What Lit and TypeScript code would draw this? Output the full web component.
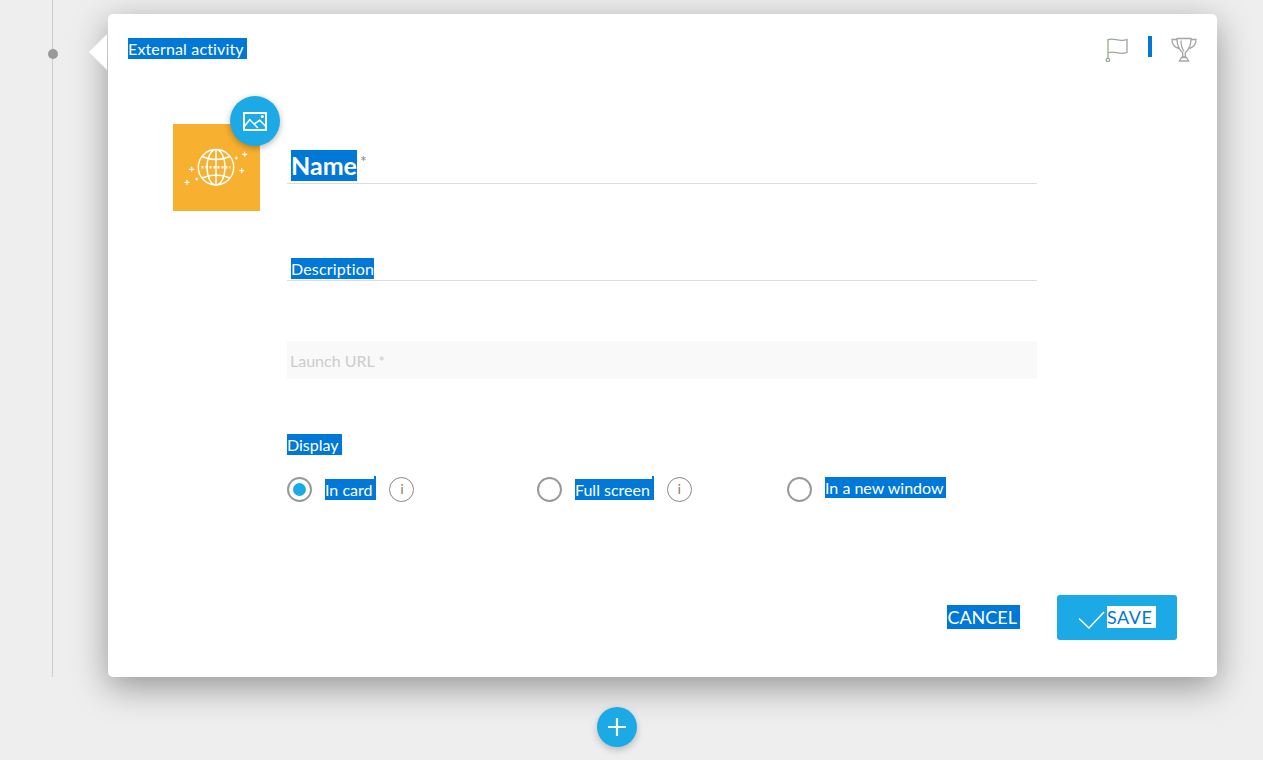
import { LitElement, html, css, svg } from "lit";
import { customElement } from "lit/decorators.js";

const sparkles: [number, number, number][] = [
  [71.7, 30.3, 2.5], [63.3, 34, 1.6], [68.7, 46.7, 2.5],
  [18.7, 45.3, 2.5], [23.7, 55, 1.6], [14, 58.3, 2.5],
];
const globe = svg`<g fill="none" stroke="#fff" stroke-width="1.500">
<circle cx="43" cy="43.300" r="17.700"/>
<ellipse cx="43" cy="43.300" rx="9" ry="17.700"/>
<path d="M43 25.600v35.400M29 32.500q14 6 28 0M29 54q14-6 28 0"/>
<path d="M28.500 43.300h29" stroke-dasharray="2 2" stroke-width="2.600"/>
${sparkles.map(([x, y, r]) => svg`<path d="M${x - r} ${y}h${2 * r}M${x} ${y - r}v${2 * r}" stroke-width="1.200"/>`)}
</g>`;

@customElement("app-root")
export class AppRoot extends LitElement {
  static styles = css`
    :host { display: block; font-family: Lato, "Open Sans", sans-serif; color: #555; }
    .page { position: relative; height: 760px; box-sizing: border-box; padding: 14px 46px 0 108px; background: #eee; overflow: hidden; }
    .line { position: absolute; left: 52px; top: 0; width: 1px; height: 677px; background: #ccc; }
    .dot { position: absolute; left: 48px; top: 49px; width: 10px; height: 10px; border-radius: 50%; background: #999; }
    .hl { background: #0078d7; color: #fff; padding-block: 1px; }
    .card { position: relative; box-sizing: border-box; height: 663px; background: #fff; border-radius: 5px; box-shadow: 0 10px 35px rgba(0,0,0,.38); display: flex; flex-direction: column; padding: 24px 40px 37px 20px; }
    .arrow { position: absolute; left: -19px; top: 20px; width: 0; height: 0; border-style: solid; border-width: 18px 18px 18px 0; border-color: transparent #fff transparent transparent; }
    .head { display: flex; justify-content: space-between; align-items: flex-start; height: 86px; margin-right: -20px; }
    .title { font-size: 16px; line-height: 22px; }
    .title .hl { letter-spacing: .15px; padding-right: 3px; }
    .marks { display: flex; align-items: flex-start; margin-top: -1px; }
    .flag { display: block; margin-right: 20px; }
    .bar { width: 4px; height: 21px; margin-top: -1px; background: #0078d7; margin-right: 19px; }
    .trophy { display: block; }
    .body { display: flex; flex: 1; padding-left: 45px; }
    .thumbcol { width: 114px; flex: none; }
    .thumb { position: relative; width: 87px; height: 87px; background: #f7b02f; }
    .thumb > svg { display: block; }
    .pic { position: absolute; left: 57px; top: -28px; width: 50px; height: 50px; border-radius: 50%; background: #1baae5; box-shadow: 0 2px 6px rgba(0,0,0,.3); display: flex; align-items: center; justify-content: center; }
    .form { width: 750px; flex: none; display: flex; flex-direction: column; }
    .field { border-bottom: 1px solid #ddd; padding-left: 4px; }
    .name { margin-top: 26px; height: 33px; font-size: 25px; line-height: 31px; font-weight: 700; display: flex; align-items: flex-start; }
    .name .hl { padding-block: 0; }
    .star { font-size: 16px; font-weight: 400; color: #888; line-height: 22px; margin-left: 3px; }
    .desc { margin-top: 64px; height: 33px; box-sizing: border-box; font-size: 16px; line-height: 21px; padding-top: 10px; }
    .desc .hl { letter-spacing: .18px; }
    .url { margin-top: 60px; height: 38px; background: #f9f9f9; color: #ccc; font-size: 16px; line-height: 40px; padding-left: 3px; }
    .lbl { margin-top: 55px; font-size: 16px; line-height: 22px; }
    .lbl .hl { padding-right: 3px; }
    .opts { display: flex; margin-top: 18px; }
    .opt { width: 250px; display: flex; align-items: center; height: 30px; }
    .radio { box-sizing: border-box; width: 25px; height: 25px; border: 2px solid #999; border-radius: 50%; display: flex; align-items: center; justify-content: center; margin-right: 13px; flex: none; }
    .radio i { display: block; width: 13px; height: 13px; border-radius: 50%; background: #1baae5; }
    .txt { position: relative; font-size: 16px; line-height: 19px; padding-right: 4px; }
    .notch::after { content: ""; position: absolute; right: 0; top: -3px; width: 2px; height: 3px; background: #0078d7; }
    .up { margin-top: -4px; padding-right: 2px; }
    .info { box-sizing: border-box; width: 25px; height: 25px; border-radius: 50%; border: 1px solid #888; margin: 1px 0 0 13px; font-size: 13px; line-height: 23px; text-align: center; color: #8a6a55; flex: none; }
    .foot { display: flex; justify-content: flex-end; align-items: center; }
    .cancel { font-size: 18px; line-height: 22px; margin: -2px 37px 0 0; padding-right: 3px; }
    .save { box-sizing: border-box; width: 120px; height: 45px; border-radius: 3px; background: #1baae5; display: flex; align-items: center; padding-left: 22px; }
    .save svg { flex: none; margin-right: 2px; margin-top: 3px; }
    .save span { background: #fff; color: #0078d7; font-size: 18px; line-height: 22px; letter-spacing: .5px; padding-right: 4px; margin-top: -2px; }
    .plus { position: absolute; left: 597px; top: 707px; width: 40px; height: 40px; border-radius: 50%; background: #1baae5; box-shadow: 0 3px 7px rgba(0,0,0,.22); display: flex; align-items: center; justify-content: center; }
  `;
  render() {
    return html`<div class="page">
      <div class="line"></div><div class="dot"></div>
      <div class="card">
        <div class="arrow"></div>
        <div class="head">
          <div class="title"><span class="hl">External activity</span></div>
          <div class="marks">
            <svg class="flag" width="23" height="25" viewBox="0 0 23 25" fill="none" stroke="#a3a3a3" stroke-width="1.300"><path d="M3 22V2" stroke="#93b083"/><path d="M3 3C8 0 14 5.500 22 2.500v13c-8 3-13-2.500-19 .5"/><circle cx="2.800" cy="23" r="1.700"/></svg>
            <div class="bar"></div>
            <svg class="trophy" width="26" height="25" viewBox="0 0 26 25" fill="none" stroke="#a5a5a5" stroke-width="1.300"><path d="M6 1.500h14c0 6-1 10-5 13.500l-.7 1v4h-2.600v-4l-.7-1C7 11.500 6 7.500 6 1.500z"/><path d="M6 2.500H1c0 5 3 8 7 9M20 2.500h5c0 5-3 8-7 9M10 3.500c0 4 1 8 3 11"/><path d="M8.500 24l2-3.500h5l2 3.500z"/></svg>
          </div>
        </div>
        <div class="body">
          <div class="thumbcol"><div class="thumb">
            <svg width="87" height="87" viewBox="0 0 87 87">${globe}</svg>
            <div class="pic"><svg width="24" height="19" viewBox="0 0 24 19" fill="none" stroke="#fff" stroke-width="2"><rect x="1" y="1" width="22" height="17"/><path d="M1.500 14.300l5.200-6.600L15 16M11.700 11.700l5-3.400 6 6" stroke-width="1.500"/><circle cx="19.300" cy="4.500" r="1.600" fill="#fff" stroke="none"/></svg></div>
          </div></div>
          <div class="form">
            <div class="field name"><span class="hl">Name</span><span class="star">*</span></div>
            <div class="field desc"><span class="hl">Description</span></div>
            <div class="url">Launch URL *</div>
            <div class="lbl"><span class="hl">Display</span></div>
            <div class="opts">
              <div class="opt"><div class="radio"><i></i></div><span class="txt hl notch">In card</span><div class="info">i</div></div>
              <div class="opt"><div class="radio"></div><span class="txt hl notch">Full screen</span><div class="info">i</div></div>
              <div class="opt"><div class="radio"></div><span class="txt hl up">In a new window</span></div>
            </div>
          </div>
        </div>
        <div class="foot">
          <span class="cancel hl">CANCEL</span>
          <div class="save"><svg width="26" height="20" viewBox="0 0 26 20" fill="none" stroke="#fff" stroke-width="1.500"><path d="M0 9.500l10 9.500L25 3"/></svg><span>SAVE</span></div>
        </div>
      </div>
      <div class="plus"><svg width="18" height="18" viewBox="0 0 18 18" stroke="#fff" stroke-width="2.200"><path d="M0 9h18M9 0v18"/></svg></div>
    </div>`;
  }
}
